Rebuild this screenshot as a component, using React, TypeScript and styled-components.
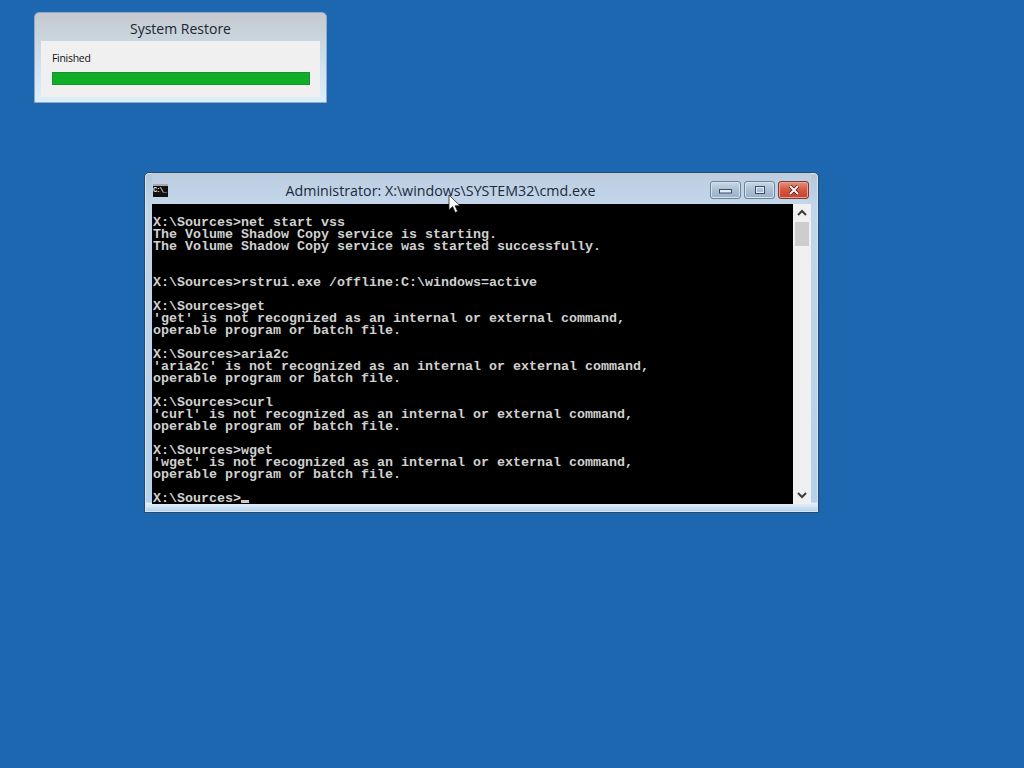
import React from 'react'
import styled, { createGlobalStyle } from 'styled-components'

const terminalLines = [
  'X:\\Sources>net start vss',
  'The Volume Shadow Copy service is starting.',
  'The Volume Shadow Copy service was started successfully.',
  '',
  '',
  'X:\\Sources>rstrui.exe /offline:C:\\windows=active',
  '',
  'X:\\Sources>get',
  "'get' is not recognized as an internal or external command,",
  'operable program or batch file.',
  '',
  'X:\\Sources>aria2c',
  "'aria2c' is not recognized as an internal or external command,",
  'operable program or batch file.',
  '',
  'X:\\Sources>curl',
  "'curl' is not recognized as an internal or external command,",
  'operable program or batch file.',
  '',
  'X:\\Sources>wget',
  "'wget' is not recognized as an internal or external command,",
  'operable program or batch file.',
  '',
]

const App = () => {
  return (
    <Desktop>
      <GlobalStyle />
      <RestoreDialog>
        <DialogTitle>System Restore</DialogTitle>
        <DialogBody>
          <StatusLabel>Finished</StatusLabel>
          <ProgressBar />
        </DialogBody>
      </RestoreDialog>

      <CmdWindow>
        <TitleBar>
          <CmdIcon>C:\_</CmdIcon>
          <WindowTitle>Administrator: X:\windows\SYSTEM32\cmd.exe</WindowTitle>
          <WindowButtons>
            <CaptionButton>
              <svg width="16" height="8" viewBox="0 0 16 8">
                <rect x="1.5" y="3.5" width="12" height="3.5" fill="#e4ebf2" stroke="#3d4c60" />
              </svg>
            </CaptionButton>
            <CaptionButton>
              <svg width="14" height="10" viewBox="0 0 14 10">
                <rect x="2.5" y="1.5" width="9" height="7" fill="none" stroke="#3d4c60" />
                <rect x="3.5" y="2.5" width="7" height="5" fill="none" stroke="#e4ebf2" />
              </svg>
            </CaptionButton>
            <CloseButton>
              <svg width="14" height="10" viewBox="0 0 14 10">
                <path d="M3 1 L11 9 M11 1 L3 9" stroke="#3f1c18" strokeWidth="3.6" />
                <path d="M3 1 L11 9 M11 1 L3 9" stroke="#f4efec" strokeWidth="2.2" />
              </svg>
            </CloseButton>
          </WindowButtons>
        </TitleBar>
        <ClientArea>
          <Terminal>
            {terminalLines.map((line, i) => (
              <TerminalLine key={i}>{line}</TerminalLine>
            ))}
            <LastLine>
              X:\Sources&gt;<Caret />
            </LastLine>
          </Terminal>
          <ScrollBar>
            <ScrollArrow>
              <svg width="10" height="8" viewBox="0 0 10 8">
                <path d="M1 6 L5 2 L9 6" fill="none" stroke="#3c3c3c" strokeWidth="2" />
              </svg>
            </ScrollArrow>
            <ScrollThumb />
            <ScrollTrack />
            <ScrollArrow>
              <svg width="10" height="8" viewBox="0 0 10 8">
                <path d="M1 2 L5 6 L9 2" fill="none" stroke="#3c3c3c" strokeWidth="2" />
              </svg>
            </ScrollArrow>
          </ScrollBar>
        </ClientArea>
      </CmdWindow>

      <Pointer width="14" height="20" viewBox="0 0 14 20">
        <path d="M1 1 L1 16 L4.6 12.6 L7.2 18.4 L9.6 17.4 L7 11.8 L12 11.8 Z" fill="#fff" stroke="#222" strokeWidth="0.8" />
      </Pointer>
    </Desktop>
  )
}

export default App

const GlobalStyle = createGlobalStyle`
  html, body {
    margin: 0;
    padding: 0;
    background: #1d67b0;
  }
`

const Desktop = styled.div`
  position: relative;
  box-sizing: border-box;
  width: 1024px;
  height: 768px;
  overflow: hidden;
  padding: 12px 0 0 34px;
  background: #1d67b0;
  font-family: 'Open Sans', 'Noto Sans', sans-serif;
`

const RestoreDialog = styled.div`
  box-sizing: border-box;
  width: 293px;
  height: 91px;
  padding: 0 6px 5px;
  display: flex;
  flex-direction: column;
  border-radius: 5px 5px 0 0;
  border: 1px solid #8fa9c4;
  background: linear-gradient(#c6c9ce, #c9d6e0 30%, #cfe2f0 60%, #dbeefa);
`

const DialogTitle = styled.div`
  height: 28px;
  flex-shrink: 0;
  line-height: 32px;
  text-align: center;
  font-size: 14px;
  color: #1c2530;
`

const DialogBody = styled.div`
  flex: 1;
  padding: 10px 11px 0;
  background: #f0f0f1;
`

const StatusLabel = styled.div`
  font-size: 10.5px;
  line-height: 14px;
  letter-spacing: -0.3px;
  color: #111;
`

const ProgressBar = styled.div`
  height: 13px;
  width: 258px;
  margin-top: 7px;
  background: #0fae26;
  border: 1px solid #1d8f33;
  box-sizing: border-box;
`

const CmdWindow = styled.div`
  box-sizing: border-box;
  width: 675px;
  height: 341px;
  margin: 69px 0 0 110px;
  padding: 0 7px 8px;
  display: flex;
  flex-direction: column;
  border: 1px solid #2a4a68;
  border-radius: 5px 5px 0 0;
  background: linear-gradient(#b4c6da, #c3d5e8 10%, #b5d0ea 97%, #e4f0fa 97.5%, #b0cdea 100%);
  box-shadow: inset 0 0 0 1px #d8e6f2;
`

const TitleBar = styled.div`
  position: relative;
  height: 31px;
  flex-shrink: 0;
  display: flex;
  align-items: center;
  background: linear-gradient(#bccde0, #c3d6ea);
`

const CmdIcon = styled.div`
  width: 15px;
  height: 11px;
  margin: 3px 0 0 1px;
  background: #111;
  border-top: 2px solid #a9a9a9;
  color: #e8e8e8;
  font-family: 'Liberation Mono', monospace;
  font-size: 7px;
  font-weight: bold;
  line-height: 9px;
  letter-spacing: -1px;
  overflow: hidden;
`

const WindowTitle = styled.div`
  flex: 1;
  text-align: center;
  margin-right: 98px;
  padding-top: 3px;
  font-size: 14.25px;
  color: #1d2a3a;
`

const WindowButtons = styled.div`
  position: absolute;
  top: 8px;
  right: 2px;
  display: flex;
  gap: 3px;
`

const CaptionButton = styled.div`
  box-sizing: border-box;
  width: 31px;
  height: 18px;
  display: flex;
  align-items: center;
  justify-content: center;
  border: 1px solid #6f8398;
  border-radius: 3px;
  background: linear-gradient(#c9d9e9, #a9bfd5 50%, #98b1ca);
  box-shadow: inset 0 0 0 1px #d5e2ee;
`

const CloseButton = styled(CaptionButton)`
  border-color: #7a3a30;
  background: linear-gradient(#e58f7c, #d6563f 50%, #c9402c);
  box-shadow: inset 0 0 0 1px #eba596;
`

const ClientArea = styled.div`
  flex: 1;
  display: flex;
  min-height: 0;
`

const Terminal = styled.div`
  flex: 1;
  padding: 13px 0 0 1px;
  background: #000;
  color: #d0d0d0;
  font-family: 'Liberation Mono', monospace;
  font-size: 13.33px;
  font-weight: bold;
  line-height: 12px;
`

const TerminalLine = styled.div`
  height: 12px;
  white-space: pre;
`

const LastLine = styled(TerminalLine)`
  height: 11px;
`

const Caret = styled.span`
  display: inline-block;
  width: 8px;
  height: 3px;
  margin-bottom: -1px;
  background: #c8c8c8;
`

const ScrollBar = styled.div`
  width: 18px;
  flex-shrink: 0;
  display: flex;
  flex-direction: column;
  align-items: center;
  background: #f0f0f0;
`

const ScrollArrow = styled.div`
  height: 18px;
  flex-shrink: 0;
  display: flex;
  align-items: center;
  justify-content: center;
`

const ScrollThumb = styled.div`
  width: 14px;
  height: 24px;
  flex-shrink: 0;
  background: #cdcdcd;
`

const ScrollTrack = styled.div`
  flex: 1;
`

const Pointer = styled.svg`
  position: absolute;
  left: 448px;
  top: 194px;
`
